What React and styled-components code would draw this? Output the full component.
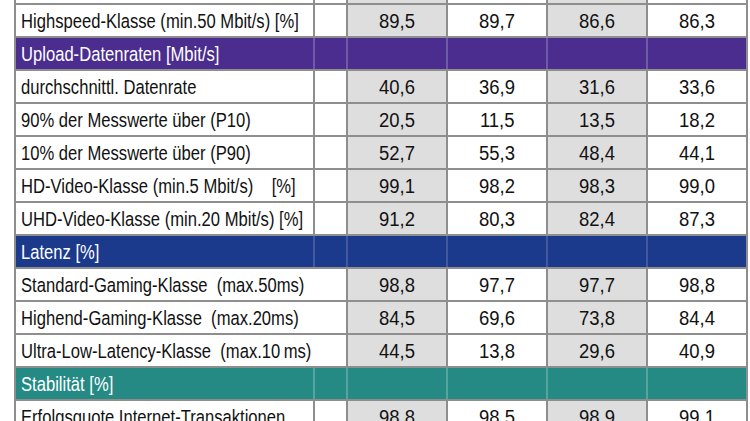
import styled, { createGlobalStyle } from 'styled-components';

const GlobalStyle = createGlobalStyle`
  body {
    margin: 0;
    background: #ffffff;
    overflow: hidden;
  }
`;

const Page = styled.div`
  padding-left: 14px;
  margin-top: -30px;
  font-family: 'Liberation Sans', Arial, sans-serif;
`;

const Table = styled.div`
  width: 734px;
  display: flex;
  flex-direction: column;
  gap: 2px;
  padding: 2px;
  box-sizing: border-box;
  background: #8e8e8e;
`;

const Row = styled.div`
  display: grid;
  grid-template-columns: 297px 31px 98px 98px 98px 98px;
  gap: 2px;
  height: 31px;
  background: ${(p) => p.$divider || '#8e8e8e'};
`;

const Label = styled.div`
  grid-column: span ${(p) => p.$span || 1};
  display: flex;
  align-items: center;
  padding-left: 5px;
  overflow: hidden;
  font-size: 20.5px;
  color: ${(p) => (p.$head ? '#ffffff' : '#111111')};
  background: ${(p) => p.$bg || '#ffffff'};
`;

// condensed look: the picture uses a narrow grotesque
const Narrow = styled.span`
  display: inline-block;
  white-space: pre;
  transform: scaleX(${(p) => p.$scale || 0.81});
  transform-origin: ${(p) => (p.$center ? 'center' : 'left')} center;
`;

const Blank = styled.div`
  background: ${(p) => p.$bg || '#ffffff'};
`;

const Value = styled.div`
  display: flex;
  align-items: center;
  justify-content: center;
  font-size: 20.5px;
  color: #111111;
  background: ${(p) => (p.$shade ? '#dedede' : '#ffffff')};
`;

const sections = [
  {
    rows: [
      { label: 'Basis-Klasse (min.16 Mbit/s) [%]', values: ['97,6', '97,4', '96,8', '96,2'] },
      { label: 'Highspeed-Klasse (min.50 Mbit/s) [%]', values: ['89,5', '89,7', '86,6', '86,3'] },
    ],
  },
  {
    title: 'Upload-Datenraten [Mbit/s]',
    color: '#4a2d8e',
    divider: '#6f5aa6',
    rows: [
      { label: 'durchschnittl. Datenrate', values: ['40,6', '36,9', '31,6', '33,6'] },
      { label: '90% der Messwerte über (P10)', values: ['20,5', '11,5', '13,5', '18,2'] },
      { label: '10% der Messwerte über (P90)', values: ['52,7', '55,3', '48,4', '44,1'] },
      { label: 'HD-Video-Klasse (min.5 Mbit/s)    [%]', values: ['99,1', '98,2', '98,3', '99,0'] },
      { label: 'UHD-Video-Klasse (min.20 Mbit/s) [%]', values: ['91,2', '80,3', '82,4', '87,3'] },
    ],
  },
  {
    title: 'Latenz [%]',
    color: '#1b3a8c',
    divider: '#42599e',
    merged: true,
    rows: [
      { label: 'Standard-Gaming-Klasse  (max.50ms)', values: ['98,8', '97,7', '97,7', '98,8'] },
      { label: 'Highend-Gaming-Klasse  (max.20ms)', values: ['84,5', '69,6', '73,8', '84,4'] },
      { label: 'Ultra-Low-Latency-Klasse  (max.10\u2009ms)', values: ['44,5', '13,8', '29,6', '40,9'] },
    ],
  },
  {
    title: 'Stabilität [%]',
    color: '#258a84',
    divider: '#55a49f',
    rows: [
      { label: 'Erfolgsquote Internet-Transaktionen', values: ['98,8', '98,5', '98,9', '99,1'] },
    ],
  },
];

const DataRow = ({ row, merged }) => (
  <Row>
    <Label $span={merged ? 2 : 1}>
      <Narrow>{row.label}</Narrow>
    </Label>
    {!merged && <Blank />}
    {row.values.map((v, i) => (
      <Value key={i} $shade={i % 2 === 0}>
        <Narrow $center $scale={0.9}>
          {v}
        </Narrow>
      </Value>
    ))}
  </Row>
);

const App = () => {
  return (
    <Page>
      <GlobalStyle />
      <Table>
        {sections.map((s, si) => [
          s.title ? (
            <Row key={`h${si}`} $divider={s.divider}>
              <Label $head $bg={s.color}>
                <Narrow>{s.title}</Narrow>
              </Label>
              {[0, 1, 2, 3, 4].map((i) => (
                <Blank key={i} $bg={s.color} />
              ))}
            </Row>
          ) : null,
          ...s.rows.map((r, ri) => <DataRow key={`${si}-${ri}`} row={r} merged={s.merged} />),
        ])}
      </Table>
    </Page>
  );
};

export default App;
